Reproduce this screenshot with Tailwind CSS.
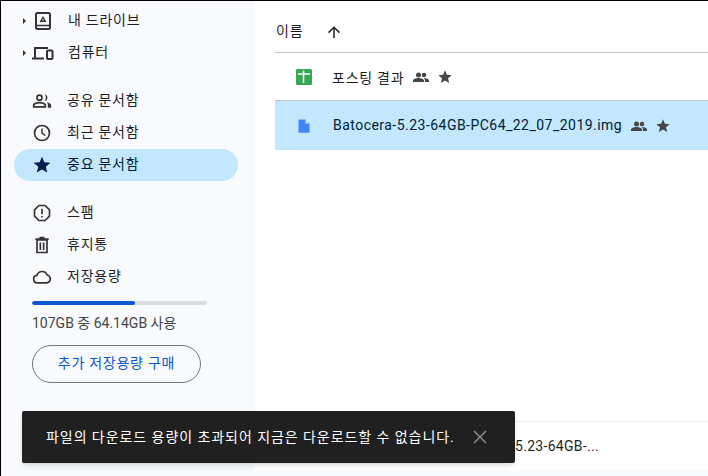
<!DOCTYPE html>
<html lang="ko">
<head>
<meta charset="UTF-8" />
<title>Drive</title>
<script src="https://cdn.jsdelivr.net/npm/@tailwindcss/browser@4"></script>
</head>
<body class="w-[708px] h-[476px] overflow-hidden bg-black font-['Roboto','Noto_Sans_CJK_KR',sans-serif]">
<div class="relative ml-px mt-px flex h-[475px] w-[707px] bg-[#f8fafd] text-[14px] tracking-[0.75px] text-[#1f1f1f]">
  <!-- sidebar -->
  <aside class="w-[254px] shrink-0 pt-1">
    <div class="flex h-8 items-center pl-[21px]">
      <svg class="w-[6px] h-[8px] text-[#333]" viewBox="0 0 6 8" fill="currentColor"><path d="M1 1l3 3-3 3z"/></svg>
      <svg class="ml-[5px] w-5 h-5" viewBox="0 0 20 20" fill="none" stroke="#333" stroke-width="2"><rect x="3" y="2" width="14" height="16" rx="1.5"/><path d="M3 14.500h14" stroke-width="1.500"/><path fill="#333" stroke="none" d="M10 5l3.500 6h-7zM10 7.500L9 9.500h2z" fill-rule="evenodd"/></svg>
      <span class="ml-[15px] pb-[2px]">내 드라이브</span>
    </div>
    <div class="flex h-8 items-center pl-[21px]">
      <svg class="w-[6px] h-[8px] text-[#333]" viewBox="0 0 6 8" fill="currentColor"><path d="M1 1l3 3-3 3z"/></svg>
      <svg class="ml-[4px] w-[22px] h-5" viewBox="0 0 22 20" fill="none" stroke="#333" stroke-width="2"><path d="M3 15V5h13"/><path d="M0 15.500h12" stroke-width="2"/><rect x="15" y="7.500" width="5.500" height="8.500" rx="1"/></svg>
      <span class="ml-[14px] pb-[2px]">컴퓨터</span>
    </div>
    <div class="mt-[16px] flex h-8 items-center pl-[31px]">
      <svg class="w-5 h-5" viewBox="0 0 24 24" fill="#333"><path d="M9 12a4 4 0 1 0 0-8 4 4 0 0 0 0 8zm0-6a2 2 0 1 1 0 4 2 2 0 0 1 0-4zM9 13c-2.700 0-8 1.300-8 4v3h16v-3c0-2.700-5.300-4-8-4zm-6 5v-1c.2-.7 3.300-2 6-2s5.800 1.300 6 2v1H3zM15 4c2 .3 3.500 2 3.500 4s-1.500 3.700-3.500 4c1-1 1.600-2.500 1.600-4S16 5 15 4zM17.500 13.500c2.700.5 5.500 1.700 5.500 3.500v3h-4v-3c0-1.400-.6-2.600-1.500-3.500z"/></svg>
      <span class="ml-[15px] pb-[2px]">공유 문서함</span>
    </div>
    <div class="flex h-8 items-center pl-[31px]">
      <svg class="w-5 h-5" viewBox="0 0 24 24" fill="none" stroke="#333" stroke-width="2"><circle cx="12" cy="12" r="9"/><path d="M12 6.500V12l4 3" stroke-width="1.800"/></svg>
      <span class="ml-[15px] pb-[2px]">최근 문서함</span>
    </div>
    <div class="ml-[13px] flex h-8 w-[224px] items-center rounded-full bg-[#c2e7ff] pl-[18px] text-[#001d35]">
      <svg class="w-5 h-5" viewBox="0 0 24 24" fill="#041e49"><path d="M12 17.300l6.200 3.700-1.600-7L22 9.200l-7.200-.6L12 2 9.200 8.600 2 9.200 7.500 14l-1.700 7z"/></svg>
      <span class="ml-[15px] pb-[2px]">중요 문서함</span>
    </div>
    <div class="mt-[16px] flex h-8 items-center pl-[31px]">
      <svg class="w-5 h-5" viewBox="0 0 24 24" fill="none" stroke="#333" stroke-width="2"><path d="M8.300 3h7.400L21 8.300v7.400L15.700 21H8.300L3 15.700V8.300z" stroke-linejoin="round"/><path d="M12 7v6.500M12 15.500v2"/></svg>
      <span class="ml-[15px] pb-[2px]">스팸</span>
    </div>
    <div class="flex h-8 items-center pl-[31px]">
      <svg class="w-5 h-5" viewBox="0 0 24 24" fill="none" stroke="#333" stroke-width="2"><path d="M6 6h12v15H6zM4 5h16M9 3h6M10 9v9M14 9v9"/></svg>
      <span class="ml-[15px] pb-[2px]">휴지통</span>
    </div>
    <div class="flex h-8 items-center pl-[31px]">
      <svg class="w-5 h-5" viewBox="0 0 24 24" fill="none" stroke="#333" stroke-width="2"><path d="M6.500 19a4.500 4.500 0 0 1-.6-8.960A6.500 6.500 0 0 1 18.200 9.600 4.800 4.800 0 0 1 18 19z"/></svg>
      <span class="ml-[15px] pb-[2px]">저장용량</span>
    </div>
    <div class="ml-[31px] mt-[8px] flex h-[4px] w-[175px] overflow-hidden rounded-full bg-[#dadce0]">
      <div class="h-full w-[103px] rounded-full bg-[#0b57d0]"></div>
    </div>
    <p class="ml-[31px] mt-[8px] text-[14px] leading-[20px] tracking-normal text-[#444746]">107GB 중 64.14GB 사용</p>
    <button class="ml-[31px] mt-[12px] h-[38px] w-[169px] rounded-full border border-[#747775] pb-[2px] text-[14px] tracking-[0.75px] text-[#0b57d0]">추가 저장용량 구매</button>
  </aside>
  <!-- file list -->
  <main class="mb-[5px] flex-1 overflow-hidden bg-white pl-5">
    <div class="flex h-[52px] items-center border-b border-[#c7c7c7] pl-px pt-[10px]">
      <span>이름</span>
      <svg class="ml-[22px] w-[18px] h-[18px]" viewBox="0 0 24 24" fill="#1f1f1f"><path d="M13 20h-2V8l-5.500 5.500-1.400-1.400L12 4.200l7.900 7.900-1.400 1.400L13 8z"/></svg>
    </div>
    <div class="flex h-[48px] items-center border-b border-[#c7c7c7] pl-[21px]">
      <svg class="w-4 h-4" viewBox="0 0 16 16"><rect width="16" height="16" rx="1.500" fill="#34a853"/><path d="M2 5h12M7.500 1.500V14" stroke="#fff" stroke-width="1.500"/></svg>
      <span class="ml-[20px] pt-[3px]">포스팅 결과</span>
      <svg class="ml-[9px] w-4 h-4" viewBox="0 0 16 16" fill="#444746"><circle cx="5.500" cy="6" r="2.500"/><circle cx="11" cy="6" r="2.300"/><path d="M0 13v-1.500C0 10 3 9 5.500 9S11 10 11 11.500V13zM12 13v-1.500c0-1-.5-1.700-1.300-2.400C13 9 16 10 16 11.500V13z"/></svg>
      <svg class="ml-[8px] w-4 h-4" viewBox="0 0 24 24" fill="#444746"><path d="M12 17.300l6.200 3.700-1.600-7L22 9.200l-7.200-.6L12 2 9.200 8.600 2 9.200 7.500 14l-1.700 7z"/></svg>
    </div>
    <div class="flex h-[49px] items-center bg-[#c2e7ff] pl-[21px] tracking-[0.47px] text-[#001d35]">
      <svg class="w-4 h-4" viewBox="0 0 16 16"><path d="M2.500 1.500h7l4 4v8.500a.8.800 0 0 1-.8.800H3.300a.8.800 0 0 1-.8-.800z" fill="#4285f4"/><path d="M9.500 1.500v4h4z" fill="#d2e3fc"/></svg>
      <span class="ml-[21px]">Batocera-5.23-64GB-PC64_22_07_2019.img</span>
      <svg class="ml-[9px] w-4 h-4" viewBox="0 0 16 16" fill="#444746"><circle cx="5.500" cy="6" r="2.500"/><circle cx="11" cy="6" r="2.300"/><path d="M0 13v-1.500C0 10 3 9 5.500 9S11 10 11 11.500V13zM12 13v-1.500c0-1-.5-1.700-1.300-2.400C13 9 16 10 16 11.500V13z"/></svg>
      <svg class="ml-[8px] w-4 h-4" viewBox="0 0 24 24" fill="#444746"><path d="M12 17.300l6.200 3.700-1.600-7L22 9.200l-7.200-.6L12 2 9.200 8.600 2 9.200 7.500 14l-1.700 7z"/></svg>
    </div>
  </main>
  <!-- download bar peeking out under the toast -->
  <div class="absolute bottom-[5px] left-[254px] right-0 flex h-[50px] items-center justify-end rounded-bl-2xl border-t border-[#eeeeee] bg-white pr-[109px] tracking-[0.3px]">5.23-64GB-...</div>
  <!-- toast -->
  <div class="absolute left-[21px] top-[410px] flex h-[52px] w-[493px] items-center rounded-[2px] bg-[#202020] pl-[24px] tracking-[0.94px] text-white shadow-md">
    <span>파일의 다운로드 용량이 초과되어 지금은 다운로드할 수 없습니다.</span>
    <svg class="ml-[17px] w-[16px] h-[16px]" viewBox="0 0 16 16" stroke="#8a8a8a" stroke-width="1.500" fill="none"><path d="M2 2l12 12M14 2L2 14"/></svg>
  </div>
</div>
</body>
</html>
